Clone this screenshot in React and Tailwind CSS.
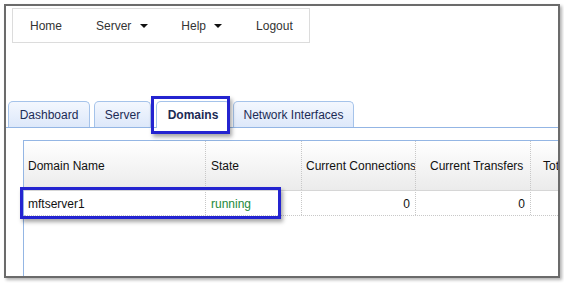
import React from 'react'

const Caret = () => (
    <svg width="8" height="4" viewBox="0 0 8 4" className="block">
        <path d="M0 0 H8 L4 4 Z" fill="#111" />
    </svg>
)

export default function App() {
    const cols = [
        { label: 'Domain Name', w: 'w-[182px] pl-[4px]' },
        { label: 'State', w: 'w-[96px] pl-[5px]' },
        { label: 'Current Connections', w: 'w-[114px] pl-[4px]' },
        { label: 'Current Transfers', w: 'w-[115px] pl-[14px]' },
        { label: 'Total Connections', w: 'w-[140px] pl-[12px]' },
    ]

    return (
        <div className="relative w-[564px] h-[283px] bg-white pl-[4px] pt-[4px] font-['Liberation_Sans',Arial,sans-serif] overflow-hidden">
            {/* window frame */}
            <div className="w-[556px] h-[274px] border-2 border-[#6b6b6b] bg-white overflow-hidden shadow-[2px_2px_3px_rgba(0,0,0,0.3)]">
                {/* top menu */}
                <div className="ml-[6px] mt-[2px] w-[298px] h-[35px] border border-[#dcdcdc] flex items-center text-[12px] text-[#333]">
                    <span className="ml-[17px]">Home</span>
                    <span className="ml-[34px]">Server</span>
                    <span className="ml-[9px]"><Caret /></span>
                    <span className="ml-[33px]">Help</span>
                    <span className="ml-[8px]"><Caret /></span>
                    <span className="ml-[34px]">Logout</span>
                </div>

                {/* tabs */}
                <div className="mt-[58px] h-[27px] flex items-end pl-[2px] border-b border-[#93b5e4] text-[12px] text-[#1c2b55]">
                    <div className="w-[82px] h-[26px] pt-px flex items-center justify-center rounded-t-[5px] border border-b-0 border-[#a5c3ea] bg-gradient-to-b from-[#f3f7fe] to-[#dde8fa]">
                        Dashboard
                    </div>
                    <div className="ml-[4px] w-[57px] h-[26px] pt-px flex items-center justify-center rounded-t-[5px] border border-b-0 border-[#a5c3ea] bg-gradient-to-b from-[#f3f7fe] to-[#dde8fa]">
                        Server
                    </div>
                    <div className="ml-[5px] w-[74px] h-[27px] -mb-px flex items-center justify-center rounded-t-[5px] border border-b-0 border-[#a5c3ea] bg-white font-bold">
                        Domains
                    </div>
                    <div className="ml-[3px] w-[121px] h-[26px] pt-px flex items-center justify-center rounded-t-[5px] border border-b-0 border-[#a5c3ea] bg-gradient-to-b from-[#f3f7fe] to-[#dde8fa]">
                        Network Interfaces
                    </div>
                </div>

                {/* domains panel */}
                <div className="ml-[17px] mt-[12px] h-[200px] border-l border-t border-[#94b6e4] text-[12px] text-[#111]">
                    <div className="flex h-[50px] bg-gradient-to-b from-[#ffffff] to-[#ebebeb] border-b border-[#d6d6d6]">
                        {cols.map((c, i) => (
                            <div
                                key={c.label}
                                className={`${c.w} shrink-0 flex items-center whitespace-nowrap overflow-hidden ${i < cols.length - 1 ? 'border-r border-dotted border-[#c8c8c8]' : ''}`}
                            >
                                {c.label}
                            </div>
                        ))}
                    </div>
                    <div className="flex h-[25px] pt-px border-b border-dotted border-[#c8c8c8]">
                        <div className="w-[182px] shrink-0 flex items-center pl-[4px] border-r border-dotted border-[#c8c8c8]">mftserver1</div>
                        <div className="w-[96px] shrink-0 flex items-center pl-[5px] text-[#23893a] border-r border-dotted border-[#c8c8c8]">running</div>
                        <div className="w-[114px] shrink-0 flex items-center justify-end pr-[5px] border-r border-dotted border-[#c8c8c8]">0</div>
                        <div className="w-[115px] shrink-0 flex items-center justify-end pr-[5px] border-r border-dotted border-[#c8c8c8]">0</div>
                        <div className="w-[140px] shrink-0"></div>
                    </div>
                </div>
            </div>

            {/* callout highlights */}
            <div className="absolute left-[151px] top-[96px] w-[79px] h-[38px] border-[3px] border-[#2424d0] shadow-[2px_3px_4px_rgba(0,0,0,0.35)]"></div>
            <div className="absolute left-[20px] top-[187px] w-[261px] h-[32px] border-[3px] border-[#2424d0] shadow-[2px_3px_4px_rgba(0,0,0,0.35)]"></div>
        </div>
    )
}
